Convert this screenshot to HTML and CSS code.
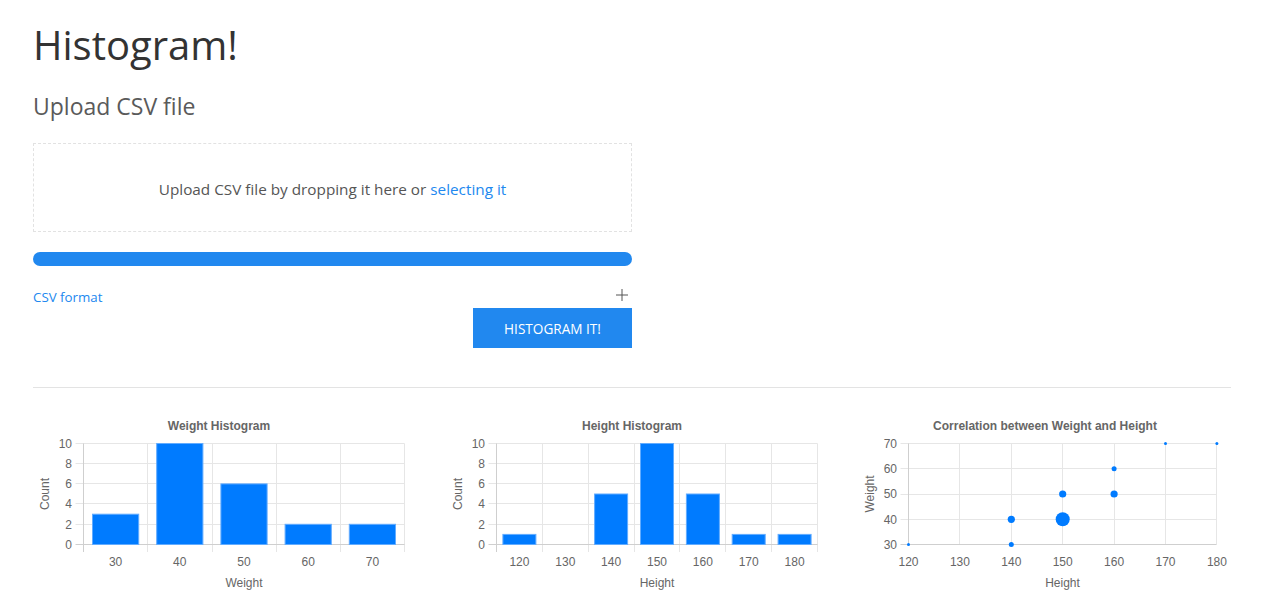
FILE: index.html
```html
<!DOCTYPE html>
<html lang="en">
<head>
<meta charset="utf-8">
<title>Histogram!</title>
<link rel="stylesheet" href="styles.css">
</head>
<body>
<div class="page">
  <h1 class="title">Histogram!</h1>
  <h4 class="subtitle">Upload CSV file</h4>
  <div class="upload-col">
    <div class="dropzone">Upload CSV file by dropping it here or&nbsp;<a class="link" href="#">selecting it</a></div>
    <div class="progress"><div class="progress-bar"></div></div>
    <div class="format-row">
      <a class="link small" href="#">CSV format</a>
      <svg class="plus" width="12" height="12" viewBox="0 0 12 12"><path d="M6 0V12M0 6H12" stroke="#555" stroke-width="1" fill="none"/></svg>
    </div>
    <div class="actions"><button class="btn">HISTOGRAM IT!</button></div>
  </div>
  <hr class="divider">
  <div class="charts">
    <svg class="chart" width="372" height="186" viewBox="0 0 372 186">
      <text class="ctitle" x="186" y="17" text-anchor="middle">Weight Histogram</text>
      <g class="grid">
        <path d="M42.5 30.5H371.5M42.5 50.5H371.5M42.5 70.5H371.5M42.5 90.5H371.5M42.5 111.5H371.5"/>
        <path d="M114.5 30.5V139M179.5 30.5V139M243.5 30.5V139M307.5 30.5V139M371.5 30.5V139"/>
      </g>
      <g class="axis">
        <path d="M50.5 30.5V139M42.5 131.5H371.5"/>
      </g>
      <g class="bars">
        <rect x="59.5" y="101.2" width="46.2" height="30.3"/>
        <rect x="123.7" y="30.5" width="46.2" height="101"/>
        <rect x="187.9" y="70.9" width="46.2" height="60.6"/>
        <rect x="252.1" y="111.3" width="46.2" height="20.2"/>
        <rect x="316.3" y="111.3" width="46.2" height="20.2"/>
      </g>
      <g class="lbl" text-anchor="end">
        <text x="39" y="35">10</text><text x="39" y="55">8</text><text x="39" y="75">6</text><text x="39" y="95">4</text><text x="39" y="116">2</text><text x="39" y="136">0</text>
      </g>
      <g class="lbl" text-anchor="middle">
        <text x="82.6" y="153">30</text><text x="146.8" y="153">40</text><text x="211" y="153">50</text><text x="275.2" y="153">60</text><text x="339.4" y="153">70</text>
        <text x="211" y="174">Weight</text>
        <text transform="rotate(-90 11.5 81)" x="11.5" y="81">Count</text>
      </g>
    </svg>
    <svg class="chart" width="372" height="186" viewBox="0 0 372 186">
      <text class="ctitle" x="186" y="17" text-anchor="middle">Height Histogram</text>
      <g class="grid">
        <path d="M42.5 30.5H371.5M42.5 50.5H371.5M42.5 70.5H371.5M42.5 90.5H371.5M42.5 111.5H371.5"/>
        <path d="M96.5 30.5V139M142.5 30.5V139M188.5 30.5V139M233.5 30.5V139M279.5 30.5V139M325.5 30.5V139M371.5 30.5V139"/>
      </g>
      <g class="axis">
        <path d="M50.5 30.5V139M42.5 131.5H371.5"/>
      </g>
      <g class="bars">
        <rect x="56.9" y="121.4" width="33" height="10.1"/>
        <rect x="148.6" y="81" width="33" height="50.5"/>
        <rect x="194.5" y="30.5" width="33" height="101"/>
        <rect x="240.4" y="81" width="33" height="50.5"/>
        <rect x="286.2" y="121.4" width="33" height="10.1"/>
        <rect x="332.1" y="121.4" width="33" height="10.1"/>
      </g>
      <g class="lbl" text-anchor="end">
        <text x="39" y="35">10</text><text x="39" y="55">8</text><text x="39" y="75">6</text><text x="39" y="95">4</text><text x="39" y="116">2</text><text x="39" y="136">0</text>
      </g>
      <g class="lbl" text-anchor="middle">
        <text x="73.4" y="153">120</text><text x="119.3" y="153">130</text><text x="165.1" y="153">140</text><text x="211" y="153">150</text><text x="256.8" y="153">160</text><text x="302.7" y="153">170</text><text x="348.6" y="153">180</text>
        <text x="211" y="174">Height</text>
        <text transform="rotate(-90 11.5 81)" x="11.5" y="81">Count</text>
      </g>
    </svg>
    <svg class="chart" width="372" height="186" viewBox="0 0 372 186">
      <text class="ctitle" x="186" y="17" text-anchor="middle">Correlation between Weight and Height</text>
      <g class="grid">
        <path d="M41.5 30.5H357.5M41.5 55.5H357.5M41.5 81.5H357.5M41.5 106.5H357.5"/>
        <path d="M100.5 30.5V131.5M152.5 30.5V131.5M203.5 30.5V131.5M255.5 30.5V131.5M306.5 30.5V131.5M357.5 30.5V131.5"/>
      </g>
      <g class="axis">
        <path d="M49.5 30.5V131.5M41.5 131.5H357.5"/>
      </g>
      <g class="dots">
        <circle cx="49.5" cy="131.5" r="1.5"/>
        <circle cx="152.3" cy="131.5" r="2.5"/>
        <circle cx="152.3" cy="106.3" r="3.6"/>
        <circle cx="203.7" cy="106.3" r="7"/>
        <circle cx="203.7" cy="81" r="3.6"/>
        <circle cx="255.1" cy="81" r="3.6"/>
        <circle cx="255.1" cy="55.8" r="2.5"/>
        <circle cx="306.5" cy="30.5" r="1.5"/>
        <circle cx="357.9" cy="30.5" r="1.5"/>
      </g>
      <g class="lbl" text-anchor="end">
        <text x="38" y="35">70</text><text x="38" y="60">60</text><text x="38" y="85">50</text><text x="38" y="111">40</text><text x="38" y="136">30</text>
      </g>
      <g class="lbl" text-anchor="middle">
        <text x="49.5" y="153">120</text><text x="100.9" y="153">130</text><text x="152.3" y="153">140</text><text x="203.7" y="153">150</text><text x="255.1" y="153">160</text><text x="306.5" y="153">170</text><text x="357.9" y="153">180</text>
        <text x="203.5" y="174">Height</text>
        <text transform="rotate(-90 11 81)" x="11" y="81">Weight</text>
      </g>
    </svg>
  </div>
</div>
</body>
</html>
```

FILE: styles.css
```css
* { box-sizing: border-box; }
html, body { margin: 0; padding: 0; background: #fff; }
body {
  font-family: "Open Sans", "Noto Sans", "Liberation Sans", sans-serif;
  color: #555;
}
.page {
  padding: 21px 30px 0 33px;
}
.title {
  margin: 0;
  font-size: 40px;
  line-height: 48px;
  font-weight: 400;
  color: #333;
}
.subtitle {
  margin: 23px 0 0;
  font-size: 23px;
  line-height: 29px;
  font-weight: 400;
  color: #5a5a5a;
}
.upload-col {
  width: 599px;
  margin-top: 22px;
}
.dropzone {
  height: 89px;
  border: 1px dashed #e2e2e2;
  display: flex;
  align-items: center;
  justify-content: center;
  font-size: 15.3px;
  color: #555;
  padding-top: 3px;
}
.link {
  color: #2188ef;
  text-decoration: none;
}
.progress {
  margin-top: 20px;
  height: 14px;
  border-radius: 7px;
  background: #e9ecef;
  overflow: hidden;
}
.progress-bar {
  width: 100%;
  height: 100%;
  background: #2188ef;
}
.format-row {
  margin-top: 20px;
  height: 22px;
  display: flex;
  align-items: center;
  justify-content: space-between;
}
.small { font-size: 13.3px; }
.plus { margin-right: 4px; margin-top: -4px; }
.actions {
  display: flex;
  justify-content: flex-end;
}
.btn {
  width: 159px;
  height: 40px;
  border: 0;
  border-radius: 0;
  background: #2188ef;
  color: #fff;
  font-family: inherit;
  font-size: 13.6px;
  padding: 0;
}
.divider {
  margin: 39px 0 0;
  border: 0;
  border-top: 1px solid #e3e3e3;
  height: 0;
}
.charts {
  margin-top: 25px;
  display: grid;
  grid-template-columns: repeat(3, 372px);
  column-gap: 41px;
}
.chart { display: block; font-family: "Liberation Sans", Arial, sans-serif; }
.ctitle { font-size: 12px; font-weight: bold; fill: #666; }
.grid path { stroke: #e6e6e6; stroke-width: 1; fill: none; }
.axis path { stroke: #cfcfcf; stroke-width: 1; fill: none; }
.bars rect { fill: #007bff; stroke: #62acff; stroke-width: 1; }
.dots circle { fill: #007bff; }
.lbl text { font-size: 12px; fill: #666; }
.lbl text[transform] { dominant-baseline: central; }
```
